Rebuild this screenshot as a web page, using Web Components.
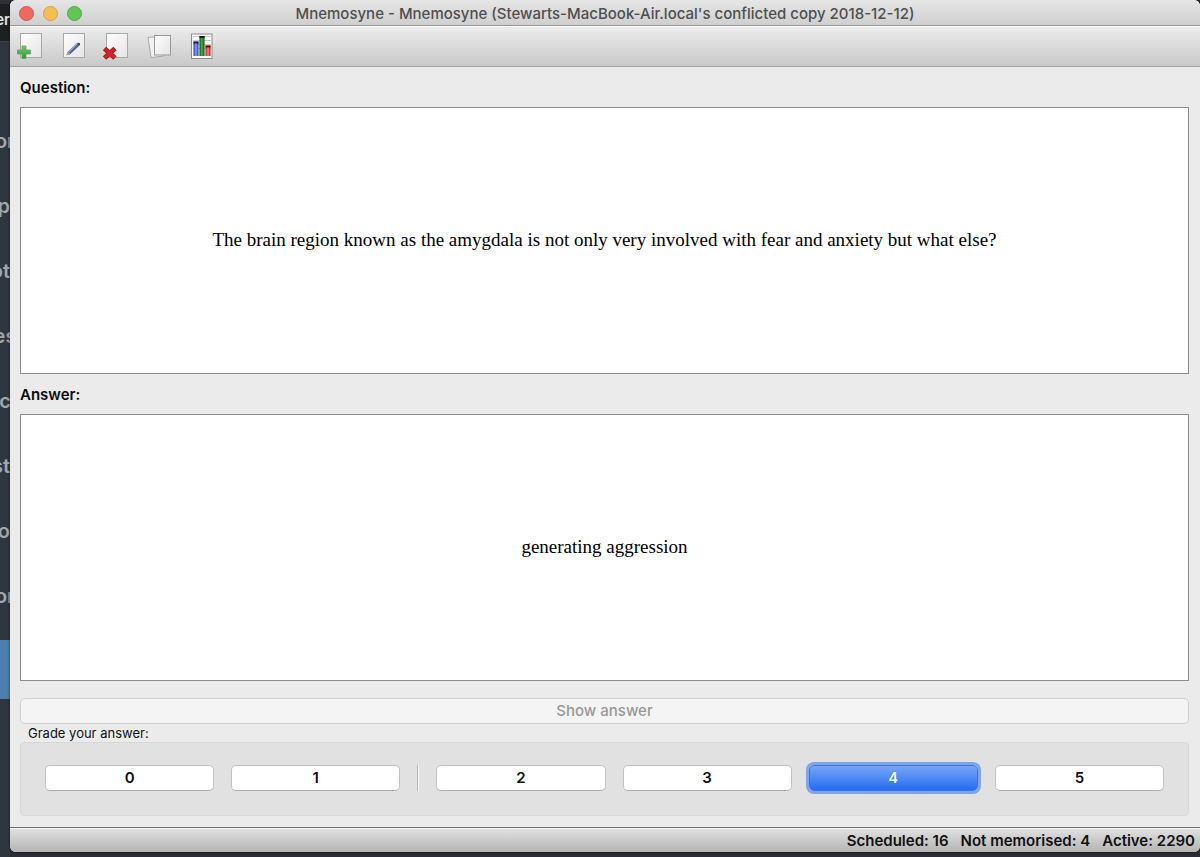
<!DOCTYPE html>
<html lang="en">
<head>
<meta charset="utf-8">
<title>Mnemosyne</title>
<style>
  html, body { margin: 0; height: 100%; }
  body { font-family: Inter, "Liberation Sans", sans-serif; color: #111; background: #2b2d34; }
</style>
</head>
<body>
<desktop-view>
  <back-window slot="behind"></back-window>
  <app-window>
    <title-bar slot="title">Mnemosyne - Mnemosyne (Stewarts-MacBook-Air.local's conflicted copy 2018-12-12)</title-bar>
    <tool-bar slot="tools"></tool-bar>
    <card-pane heading="Question:">The brain region known as the amygdala is not only very involved with fear and anxiety but what else?</card-pane>
    <card-pane heading="Answer:">generating aggression</card-pane>
    <show-answer>Show answer</show-answer>
    <grade-box></grade-box>
    <status-bar slot="status"><span>Scheduled: 16</span><span>Not memorised: 4</span><span>Active: 2290</span></status-bar>
  </app-window>
</desktop-view>
<script>
const define = (name, html, setup) => customElements.define(name, class extends HTMLElement {
  constructor() {
    super();
    this.attachShadow({ mode: "open" }).innerHTML = html;
  }
  connectedCallback() { if (setup) setup(this, this.shadowRoot); }
});

define("desktop-view", `
<style>
  :host { display: grid; grid-template-columns: 10px minmax(0, 1fr); height: 100vh; overflow: hidden; }
</style>
<slot name="behind"></slot><slot></slot>`);

define("back-window", `
<style>
  :host { display: flex; flex-direction: column; overflow: hidden; background: #30363f; color: #a3a7ab;
          font-size: 20px; font-weight: 600; }
  .top { height: 42px; flex: none; box-sizing: border-box; border-top: 4px solid #303136; border-bottom: 1px solid #3a3d41; background: #1e1f21;
         color: #e4e4e4; font-size: 15px; display: flex; justify-content: flex-end; line-height: 32px; }
  ul { flex: none; list-style: none; margin: 0; padding: 67px 0 11px; }
  li { height: 65px; line-height: 65px; display: flex; justify-content: center; }
  .selected { height: 59px; flex: none; background: #4a7fb0; }
  .end { justify-content: flex-end; }
</style>
<div class="top">er</div>
<ul><li>or</li><li class="end">p</li><li class="end">ot</li><li>es</li><li>c</li><li class="end">st</li><li class="end">o</li><li>or</li></ul>
<div class="selected"></div>`);

define("app-window", `
<style>
  :host { display: flex; flex-direction: column; margin-bottom: 5px; min-width: 0; min-height: 0; overflow: hidden;
          border-radius: 6px; background: #ebebeb; box-shadow: 0 0 3px #0009; }
  main { flex: 1; min-height: 0; display: flex; flex-direction: column; padding: 0 11px 11px 10px; }
</style>
<slot name="title"></slot>
<slot name="tools"></slot>
<main><slot></slot></main>
<slot name="status"></slot>`);

define("title-bar", `
<style>
  :host { position: relative; display: block; flex: none; height: 25px; border-bottom: 1px solid #979797;
          background: linear-gradient(#e6e6e6, #cfcfcf); color: #4f4f4f; }
  h1 { margin: 0; font-size: 15px; font-weight: 500; line-height: 27px; text-align: center; white-space: nowrap; }
  .lights { position: absolute; left: 9px; top: 6px; display: flex; gap: 9px; }
  button { width: 15px; height: 15px; padding: 0; border: 1px solid #d9564c; border-radius: 50%; background: #ee6a60; }
  .min { background: #f5be50; border-color: #d9a13c; }
  .max { background: #62c655; border-color: #4dac42; }
</style>
<div class="lights"><button aria-label="Close"></button><button class="min" aria-label="Minimise"></button><button class="max" aria-label="Zoom"></button></div>
<h1><slot></slot></h1>`);

define("tool-bar", `
<style>
  :host { display: flex; flex: none; align-items: flex-start; gap: 13px; height: 36px; padding: 4px 0 0 5px;
          border-bottom: 1px solid #a2a2a2; box-shadow: inset 0 1px #fafafa; background: linear-gradient(#ededed, #c9c9c9); }
  button { width: 30px; height: 30px; padding: 0; border: 0; background: none; }
  svg { display: block; }
</style>
<svg width="0" height="0" style="position:absolute" aria-hidden="true">
  <defs>
    <linearGradient id="page" x2="1" y2="1"><stop stop-color="#fff"/><stop offset="1" stop-color="#e4e4e4"/></linearGradient>
    <linearGradient id="plus" x2="0" y2="1"><stop stop-color="#7cc878"/><stop offset="1" stop-color="#2f9432"/></linearGradient>
    <linearGradient id="blue"><stop stop-color="#1d37b4"/><stop offset=".5" stop-color="#8fa3f5"/><stop offset="1" stop-color="#1c2f9d"/></linearGradient>
    <linearGradient id="green"><stop stop-color="#064d08"/><stop offset=".45" stop-color="#45b545"/><stop offset="1" stop-color="#064d08"/></linearGradient>
    <linearGradient id="red"><stop stop-color="#a91414"/><stop offset=".5" stop-color="#f08a8a"/><stop offset="1" stop-color="#a91414"/></linearGradient>
  </defs>
</svg>
<button aria-label="Add cards"><svg width="30" height="30">
  <rect x="5.5" y="3.5" width="21" height="24" fill="url(#page)" stroke="#a9a9a9"/>
  <path d="M7 16h4v4h4.500v4h-4.500v4.500H7V24H2.500v-4H7z" fill="url(#plus)" stroke="#58a957" stroke-width=".8"/></svg></button>
<button aria-label="Edit card"><svg width="30" height="30">
  <rect x="5.5" y="3.5" width="21" height="24" fill="url(#page)" stroke="#a9a9a9"/>
  <path d="M11 23L20 14.500" stroke="#4c6490" stroke-width="3.400" stroke-linecap="round"/>
  <path d="M11 21.800L19 14" stroke="#93a9cb" stroke-width="1.300" stroke-linecap="round"/>
  <path d="M8 25.500l2-4 2.500 2.500z" fill="#a9a08f"/><path d="M19.500 13.500l1.500-.8 1.200 1.200-.8 1.600z" fill="#2c3b56"/></svg></button>
<button aria-label="Delete card"><svg width="30" height="30">
  <rect x="5.5" y="3.5" width="21" height="24" fill="url(#page)" stroke="#a9a9a9"/>
  <path d="M3.500 18.500l10.500 9.500M14 18.500L3.500 28" stroke="#a51218" stroke-width="4.800"/>
  <path d="M4 19l9.500 8.500M13.500 19L4 27.500" stroke="#d3262b" stroke-width="3"/></svg></button>
<button aria-label="Browse cards"><svg width="30" height="30">
  <path d="M4 7.500L17 6l3 20-13 1.500z" fill="#f2f2f2" stroke="#a6a6a6"/>
  <rect x="10.500" y="5.500" width="16" height="19.500" fill="url(#page)" stroke="#999"/></svg></button>
<button aria-label="Statistics"><svg width="30" height="30">
  <rect x="4.500" y="4" width="20.500" height="24.500" fill="#fff" stroke="#8b8b8b"/>
  <path d="M6 6.500h18M6 10.500h18M6 14.500h18M6 18.500h18" stroke="#c9c9c9"/>
  <rect x="6.500" y="11.500" width="5" height="14.500" fill="url(#blue)"/><path d="M6.500 12.500h5" stroke="#16225f" stroke-width="2"/>
  <rect x="12.500" y="6" width="5" height="20" fill="url(#green)"/><path d="M12.500 7h5" stroke="#032b04" stroke-width="2"/>
  <rect x="18.500" y="15.500" width="5" height="10.500" fill="url(#red)"/><path d="M18.500 16.500h5" stroke="#6d0d0d" stroke-width="2"/></svg></button>`);

define("card-pane", `
<style>
  :host { display: flex; flex: 1; flex-direction: column; min-height: 0; }
  h2 { flex: none; margin: 0; font-size: 15px; font-weight: 600; line-height: 42px; height: 40px; color: #0c0c0c; }
  div { flex: 1; display: flex; align-items: center; justify-content: center; padding-bottom: 2px; border: 1px solid #8c8c8c; background: #fff;
        color: #000; font: 19px "Liberation Serif", serif; text-align: center; }
  p { margin: 0; }
</style>
<h2></h2><div><p><slot></slot></p></div>`, (host, root) => {
  root.querySelector("h2").textContent = host.getAttribute("heading");
});

define("show-answer", `
<style>
  :host { display: block; flex: none; margin-top: 17px; }
  button { display: block; width: 100%; height: 26px; padding: 0; border: 1px solid #d0d0d0; border-radius: 5px;
           background: #f4f4f4; color: #989898; font: 500 15px/22px Inter, sans-serif; }
</style>
<button disabled><slot></slot></button>`);

define("grade-box", `
<style>
  :host { display: block; flex: none; }
  fieldset { margin: 0; padding: 0; border: 0; min-width: 0; }
  legend { padding: 0 8px; font-size: 13px; line-height: 18px; }
  .row { display: flex; gap: 17px; padding: 22px 24px 24px; border: 1px solid #d8d8d8; border-radius: 4px; background: #e1e1e1; }
  button { flex: 1; height: 26px; padding: 0; border: 1px solid #c2c2c2; border-bottom-color: #adadad; border-radius: 5px;
           background: #fff; color: #111; font: 600 15px/22px Inter, sans-serif; }
  button.default { border-color: #3d74dc; background: linear-gradient(#76a6f5, #266bf3); color: #fff; font-weight: 500;
                   box-shadow: 0 0 0 3px #7fa4e8; outline: none; }
  i { width: 2px; background: linear-gradient(90deg, #b5b5b5 50%, #f8f8f8 50%); }
</style>
<fieldset><legend>Grade your answer:</legend>
<div class="row"><button>0</button><button>1</button><i></i><button>2</button><button>3</button><button class="default">4</button><button>5</button></div>
</fieldset>`);

define("status-bar", `
<style>
  :host { display: flex; flex: none; justify-content: flex-end; gap: 12px; height: 24px; padding-right: 5px;
          border-top: 1px solid #6f6f6f; box-shadow: inset 0 1px #f4f4f4; background: linear-gradient(#e2e2e2, #b4b4b4);
          font-size: 15px; font-weight: 600; line-height: 26px; white-space: nowrap; }
</style>
<slot></slot>`);
</script>
</body>
</html>
